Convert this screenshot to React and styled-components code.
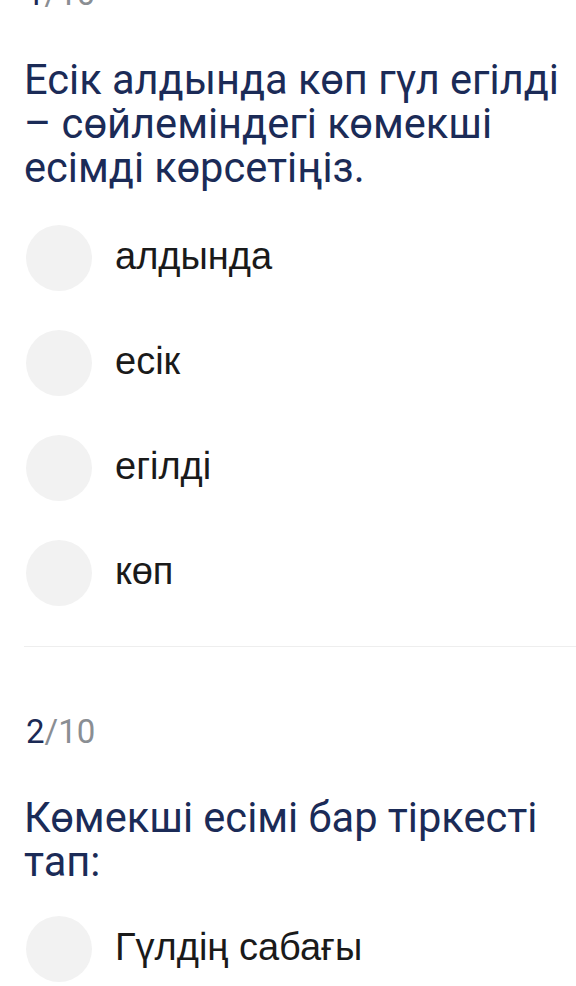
import styled, { createGlobalStyle } from 'styled-components';

const GlobalStyle = createGlobalStyle`
  html, body {
    margin: 0;
    padding: 0;
    background: #ffffff;
    overflow: hidden;
  }
  body {
    font-family: Roboto, "Liberation Sans", sans-serif;
  }
`;

const Page = styled.div`
  width: 576px;
  height: 986px;
  overflow: hidden;
  background: #ffffff;
`;

// the list is scrolled a little, so the first counter sits half above the top
const Scroller = styled.div`
  margin-top: -26px;
  padding-left: 24px;
`;

const Section = styled.section`
  display: flex;
  flex-direction: column;
  padding-top: ${(p) => (p.$first ? '0' : '65px')};
  padding-bottom: 40px;
  border-bottom: ${(p) => (p.$last ? 'none' : '1px solid #eeeeee')};
`;

const Counter = styled.div`
  font-family: Roboto, sans-serif;
  font-size: 33px;
  line-height: 40px;
  color: #8a8e93;
  padding-left: 2px;
  margin-bottom: 44px;

  b {
    font-weight: 400;
    color: #1b2a55;
  }
`;

const Question = styled.h2`
  margin: 0 0 ${(p) => p.$gap || 36}px;
  font-family: Roboto, sans-serif;
  font-weight: 400;
  font-size: 41.6px;
  line-height: 44px;
  color: #1b2b57;
  padding-right: 10px;
`;

const OptionList = styled.ul`
  list-style: none;
  margin: 0;
  padding: 0 0 0 2px;
  display: flex;
  flex-direction: column;
  gap: 39px;
`;

const Option = styled.li`
  display: flex;
  align-items: center;
  gap: 23px;
  height: 66px;
`;

const Radio = styled.span`
  flex: none;
  width: 66px;
  height: 66px;
  border-radius: 50%;
  background: #f2f2f2;
`;

const Label = styled.span`
  font-family: "Liberation Sans", Arial, sans-serif;
  font-size: 38px;
  color: #1a1a1a;
  padding-bottom: 4px;
`;

const questions = [
  {
    no: 1,
    text: 'Есік алдында көп гүл егілді – сөйлеміндегі көмекші есімді көрсетіңіз.',
    gap: 35,
    options: ['алдында', 'есік', 'егілді', 'көп'],
  },
  {
    no: 2,
    text: 'Көмекші есімі бар тіркесті тап:',
    gap: 32,
    options: ['Гүлдің сабағы'],
  },
];

const App = () => {
  return (
    <Page>
      <GlobalStyle />
      <Scroller>
        {questions.map((q, i) => (
          <Section key={q.no} $first={i === 0} $last={i === questions.length - 1}>
            <Counter>
              <b>{q.no}</b>/10
            </Counter>
            <Question $gap={q.gap}>{q.text}</Question>
            <OptionList>
              {q.options.map((opt) => (
                <Option key={opt}>
                  <Radio />
                  <Label>{opt}</Label>
                </Option>
              ))}
            </OptionList>
          </Section>
        ))}
      </Scroller>
    </Page>
  );
};

export default App;
